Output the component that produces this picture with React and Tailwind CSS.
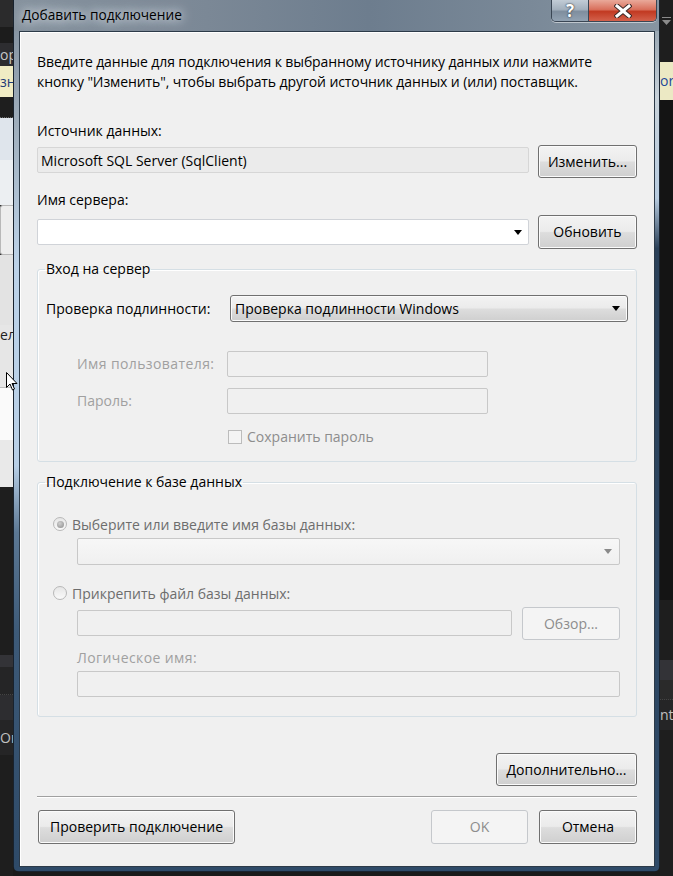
import clsx from 'clsx'

const FONT = "font-['Open_Sans','Noto_Sans',sans-serif]"

function WinButton({ children, className = '', disabled }) {
  return (
    <button
      type="button"
      className={clsx(
        'flex items-center justify-center rounded-[3px] border text-[14px] leading-none',
        disabled
          ? 'border-[#c5c8cc] bg-[#f4f4f4] text-[#8d8d8d]'
          : 'border-[#707070] bg-[linear-gradient(to_bottom,#f3f3f3_0%,#ebebeb_48%,#dddddd_52%,#cfcfcf_100%)] text-black shadow-[inset_0_0_0_1px_#fbfbfb]',
        className
      )}
    >
      {children}
    </button>
  )
}

function Arrow({ color = '#000' }) {
  return (
    <svg width="8" height="5" viewBox="0 0 8 5">
      <path d="M0 0h8L4 5z" fill={color} />
    </svg>
  )
}

function Radio({ checked }) {
  return (
    <span className="flex h-[14px] w-[14px] items-center justify-center rounded-full border border-[#b8b8b8] bg-[linear-gradient(to_bottom,#e6e6e6,#fafafa)]">
      {checked && <span className="h-[7px] w-[7px] rounded-full bg-[radial-gradient(circle_at_40%_35%,#d0d0d0,#8a8a8a)]" />}
    </span>
  )
}

function LeftStrip() {
  return (
    <div className="flex w-[13px] shrink-0 flex-col overflow-hidden text-[14px] leading-none">
      <div className="h-[27px] bg-[#2b2b2c]" />
      <div className="h-[16px] bg-[#1c1c1c]" />
      <div className="flex h-[23px] items-center bg-[#2d2d30] text-[#c8c8c8]">ор</div>
      <div className="flex h-[31px] items-center bg-[#f0ecc4] text-[#1e3c78]">зн</div>
      <div className="h-[21px] border-b border-dotted border-[#6a6a6a] bg-[#1e1e1e]" />
      <div className="h-[42px] bg-[#dfe5ec]" />
      <div className="h-[45px] bg-[#eceff2]" />
      <div className="h-[50px] rounded-l-[3px] border border-r-0 border-[#b8b8b8] bg-[#ededed]" />
      <div className="h-[70px] bg-[#e3e3e3]" />
      <div className="flex h-[20px] items-center bg-[#e6e6e6] text-[#202020]">ел</div>
      <div className="h-[42px] bg-[#e6e6e6]" />
      <div className="h-[53px] border-t border-[#bdbdbd] bg-[#fafafa]" />
      <div className="h-[47px] bg-[#e9e9e9]" />
      <div className="h-[168px] bg-[#1e1e1e]" />
      <div className="h-[12px] bg-[#333337]" />
      <div className="h-[28px] border-b border-dotted border-[#444] bg-[#252526]" />
      <div className="h-[25px] bg-[#2d2d30]" />
      <div className="flex h-[35px] items-center bg-[#252526] text-[#c0c0c0]">Оп</div>
      <div className="flex-1 bg-[#1e1e1e]" />
    </div>
  )
}

function RightStrip() {
  return (
    <div className="flex w-[13px] shrink-0 flex-col overflow-hidden text-[14px] leading-none">
      <div className="flex h-[62px] items-start justify-center bg-[#1e1e1e] pt-[17px]">
        <svg width="9" height="8" viewBox="0 0 9 8">
          <path d="M0 0h9v1H0z M0 3h9L4.5 8z" fill="#8a8a8a" />
        </svg>
      </div>
      <div className="flex h-[38px] items-center bg-[#ece9c4] text-[#1e4a9a]">or</div>
      <div className="h-[500px] bg-[#141414]" />
      <div className="h-[60px] bg-[#1e1e1e]" />
      <div className="h-[20px] bg-[#333337]" />
      <div className="h-[20px] border-b border-dotted border-[#444] bg-[#2a2a2a]" />
      <div className="flex h-[30px] items-center bg-[#252526] text-[#c0c0c0]">nt</div>
      <div className="flex-1 bg-[#1e1e1e]" />
    </div>
  )
}

function TitleBar() {
  return (
    <div className="flex h-[31px] shrink-0 items-start bg-[linear-gradient(to_right,#86929e_0%,#7b8896_30%,#6d7d8e_55%,#7a8998_80%,#8795a2_100%)]">
      <div className="pl-[8px] pt-[5px] text-[13.7px] leading-[20px] text-black [text-shadow:0_0_8px_#e6ecf2,0_0_14px_#dfe6ec]">
        Добавить подключение
      </div>
      <div className="flex-1" />
      <div className="mr-[2px] flex h-[22px] overflow-hidden rounded-b-[5px] border border-t-0 border-[#3a4654] shadow-[0_1px_0_rgba(255,255,255,0.5)]">
        <div className="flex w-[37px] items-center justify-center border-r border-[#3a4654] bg-[linear-gradient(to_bottom,#c2ccd6_0%,#a3b0bd_45%,#7f8e9e_55%,#92a2b2_100%)] text-[17px] font-bold leading-none text-white [text-shadow:0_0_2px_#2c3540,0_0_1px_#2c3540]">
          ?
        </div>
        <div className="flex w-[67px] items-center justify-center bg-[linear-gradient(to_bottom,#e9a99a_0%,#d9705c_45%,#c23a22_55%,#d3614c_100%)]">
          <svg width="18" height="14" viewBox="0 0 18 14">
            <path d="M3 2l12 10M15 2L3 12" stroke="#3b2a28" strokeWidth="5" strokeLinecap="square" />
            <path d="M3 2l12 10M15 2L3 12" stroke="#fff" strokeWidth="3" strokeLinecap="square" />
          </svg>
        </div>
      </div>
    </div>
  )
}

function Label({ children, className = '' }) {
  return <div className={clsx('text-[14px] leading-[20px]', className)}>{children}</div>
}

function Client() {
  return (
    <div className="flex h-[836px] w-[636px] flex-col border border-[#2c3a48] bg-[#f0f0f0] px-[17px] text-black shadow-[inset_1px_1px_0_#ffffff]">
      <div className="pt-[20px] text-[14px] leading-[20px] tracking-[-0.1px]">
        Введите данные для подключения к выбранному источнику данных или нажмите
        <br />
        кнопку "Изменить", чтобы выбрать другой источник данных и (или) поставщик.
      </div>

      <Label className="mt-[29px]">Источник данных:</Label>
      <div className="mt-[4px] flex items-start gap-[9px]">
        <div className="mt-[2px] flex h-[26px] w-[492px] items-center rounded-[2px] border border-[#d6d6d6] bg-[#ebebeb] pl-[3px] text-[14px]">
          Microsoft SQL Server (SqlClient)
        </div>
        <WinButton className="h-[33px] w-[99px]">Изменить...</WinButton>
      </div>

      <Label className="mt-[12px]">Имя сервера:</Label>
      <div className="mt-[5px] flex items-start gap-[9px]">
        <div className="mt-[4px] flex h-[26px] w-[492px] items-center justify-end rounded-[2px] border border-[#d0d3d8] bg-white pr-[6px]">
          <Arrow />
        </div>
        <WinButton className="h-[34px] w-[99px]">Обновить</WinButton>
      </div>

      <fieldset className="mt-[10px] rounded-[3px] border border-[#d5dfe5] pb-[14px] shadow-[inset_1px_1px_0_#fff]">
        <legend className="ml-[7px] px-[1px] text-[14px] leading-[20px]">Вход на сервер</legend>
        <div className="mt-[16px] flex items-center pl-[8px] pr-[8px]">
          <div className="w-[184px] text-[14px] leading-[20px]">Проверка подлинности:</div>
          <div className="flex h-[27px] flex-1 items-center justify-between rounded-[3px] border border-[#707070] bg-[linear-gradient(to_bottom,#f3f3f3_0%,#ebebeb_48%,#dddddd_52%,#cfcfcf_100%)] pl-[4px] pr-[7px] text-[14px] shadow-[inset_0_0_0_1px_#fbfbfb]">
            <span>Проверка подлинности Windows</span>
            <Arrow />
          </div>
        </div>
        <div className="mt-[29px] flex items-center pl-[39px]">
          <div className="w-[150px] text-[14px] leading-[20px] tracking-[0.4px] text-[#a0a0a0]">Имя пользователя:</div>
          <div className="h-[26px] w-[261px] rounded-[2px] border border-[#c8c8c8] bg-[#f0f0f0]" />
        </div>
        <div className="mt-[11px] flex items-center pl-[39px]">
          <div className="w-[150px] text-[14px] leading-[20px] text-[#a0a0a0]">Пароль:</div>
          <div className="h-[26px] w-[261px] rounded-[2px] border border-[#c8c8c8] bg-[#f0f0f0]" />
        </div>
        <div className="mt-[13px] flex h-[20px] items-center gap-[5px] pl-[190px]">
          <span className="h-[14px] w-[14px] border border-[#bcbcbc] bg-[#f4f4f4]" />
          <span className="text-[14px] leading-[20px] text-[#8d8d8d]">Сохранить пароль</span>
        </div>
      </fieldset>

      <fieldset className="mt-[10px] rounded-[3px] border border-[#d5dfe5] pb-[19px] shadow-[inset_1px_1px_0_#fff]">
        <legend className="ml-[7px] px-[1px] text-[14px] leading-[20px]">Подключение к базе данных</legend>
        <div className="mt-[22px] flex h-[20px] items-center gap-[5px] pl-[15px] text-[14px] text-[#6d6d6d]">
          <Radio checked />
          <span>Выберите или введите имя базы данных:</span>
        </div>
        <div className="ml-[39px] mr-[16px] mt-[4px] flex h-[27px] items-center justify-end rounded-[2px] border border-[#c8c8c8] bg-[linear-gradient(to_bottom,#f7f7f7,#f0f0f0)] pr-[7px]">
          <Arrow color="#8a8a8a" />
        </div>
        <div className="mt-[18px] flex h-[20px] items-center gap-[5px] pl-[15px] text-[14px] text-[#6d6d6d]">
          <Radio />
          <span>Прикрепить файл базы данных:</span>
        </div>
        <div className="ml-[39px] mr-[16px] mt-[4px] flex items-start gap-[10px]">
          <div className="mt-[3px] h-[26px] flex-1 rounded-[2px] border border-[#c8c8c8] bg-[#f0f0f0]" />
          <WinButton disabled className="h-[33px] w-[98px]">Обзор...</WinButton>
        </div>
        <div className="ml-[39px] mt-[8px] text-[14px] leading-[20px] tracking-[0.4px] text-[#a0a0a0]">Логическое имя:</div>
        <div className="ml-[39px] mr-[16px] mt-[3px] h-[26px] rounded-[2px] border border-[#c8c8c8] bg-[#f0f0f0]" />
      </fieldset>

      <div className="mt-[36px] flex justify-end">
        <WinButton className="h-[33px] w-[141px]">Дополнительно...</WinButton>
      </div>

      <div className="mt-[10px] border-t border-[#a0a0a0] shadow-[0_1px_0_#ffffff]" />

      <div className="mt-[13px] flex items-center">
        <WinButton className="ml-[1px] h-[34px] w-[197px]">Проверить подключение</WinButton>
        <div className="flex-1" />
        <WinButton disabled className="h-[34px] w-[97px]">OK</WinButton>
        <WinButton className="ml-[11px] h-[34px] w-[98px]">Отмена</WinButton>
      </div>
    </div>
  )
}

export default function App() {
  return (
    <div className={clsx('relative flex h-[876px] w-[673px] overflow-hidden bg-[#1a1a1a]', FONT)}>
      <LeftStrip />
      <div className="flex h-[872px] w-[647px] shrink-0 flex-col rounded-b-[7px] border border-t-0 border-[#18222e] bg-[#2e4a68]">
        <TitleBar />
        <div className="flex">
          <div className="w-[5px] shrink-0 bg-[linear-gradient(to_bottom,#8795a3_0%,#a1b0be_12%,#bcd2e8_28%,#b8cfe6_52%,#5c7894_60%,#3d5a78_72%,#2e4a68_100%)]" />
          <Client />
          <div className="w-[4px] shrink-0 bg-[linear-gradient(to_bottom,#9aa8b4_0%,#c8d2da_8%,#b8cce0_20%,#2a4058_26%,#2e4a68_100%)]" />
        </div>
        <div className="flex-1 rounded-b-[6px] bg-[#2e4a68]" />
      </div>
      <RightStrip />
      <svg className="absolute left-[6px] top-[372px]" width="12" height="19" viewBox="0 0 12 19">
        <path d="M0.5 0.5v15l3.5-3.5 2.5 6 2-1-2.5-5.5h5z" fill="#fff" stroke="#000" strokeWidth="1" />
      </svg>
    </div>
  )
}
